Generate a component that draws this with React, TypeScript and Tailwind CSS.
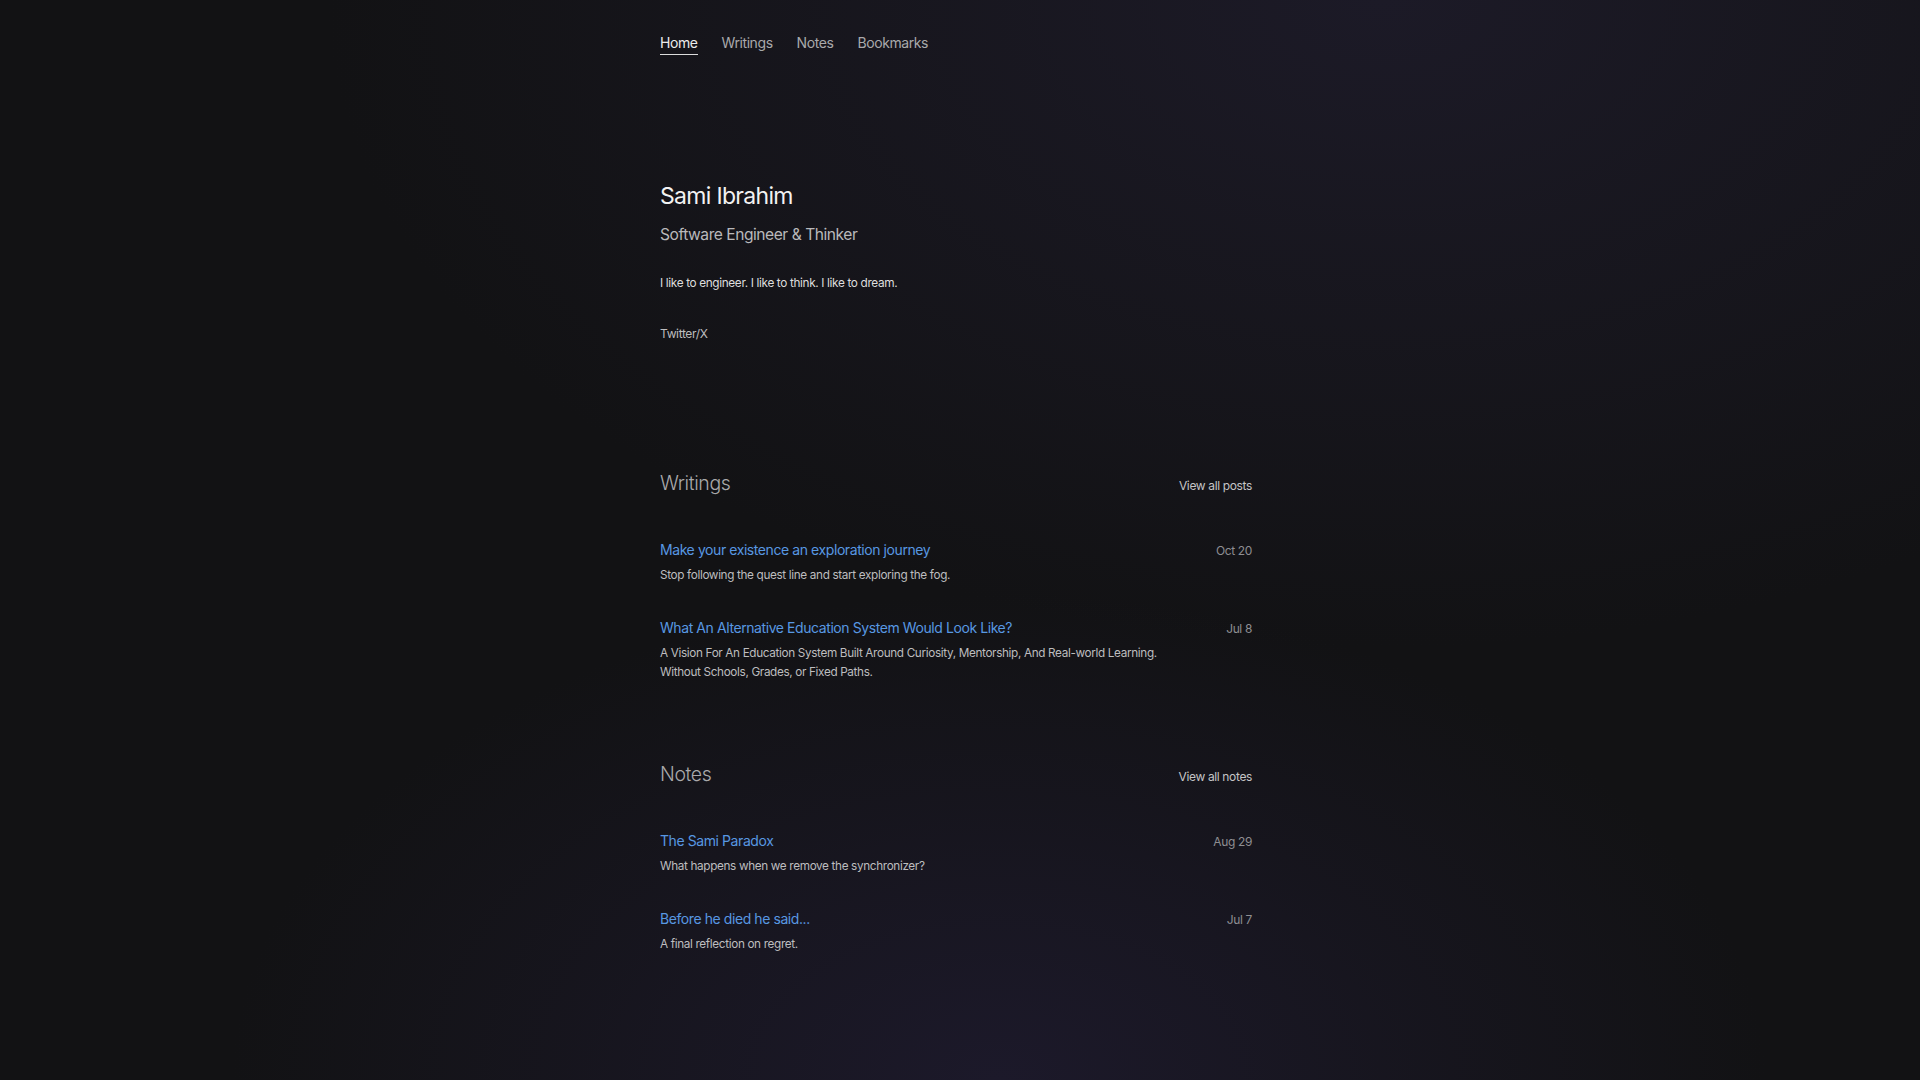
type Entry = {
  title: string;
  summary: string;
  date: string;
};

const writings: Entry[] = [
  {
    title: 'Make your existence an exploration journey',
    summary: 'Stop following the quest line and start exploring the fog.',
    date: 'Oct 20',
  },
  {
    title: 'What An Alternative Education System Would Look Like?',
    summary:
      'A Vision For An Education System Built Around Curiosity, Mentorship, And Real-world Learning. Without Schools, Grades, or Fixed Paths.',
    date: 'Jul 8',
  },
];

const notes: Entry[] = [
  {
    title: 'The Sami Paradox',
    summary: 'What happens when we remove the synchronizer?',
    date: 'Aug 29',
  },
  {
    title: 'Before he died he said...',
    summary: 'A final reflection on regret.',
    date: 'Jul 7',
  },
];

const navItems = ['Home', 'Writings', 'Notes', 'Bookmarks'];

function Section({ heading, linkLabel, entries, className }: { heading: string; linkLabel: string; entries: Entry[]; className?: string }) {
  return (
    <section className={className}>
      <div className="flex items-baseline justify-between">
        <h2 className="text-[19.5px] leading-7 font-light tracking-[-0.02em] text-[#a9a9ab]">{heading}</h2>
        <a href="#" className="text-[12px] leading-4 tracking-[-0.03em] text-[#c4c4c6]">
          {linkLabel}
        </a>
      </div>
      <div className="mt-[42px] flex flex-col gap-8">
        {entries.map((entry) => (
          <div key={entry.title} className="flex items-baseline justify-between gap-8">
            <div className="max-w-[530px]">
              <a href="#" className="block text-[14px] leading-[22px] tracking-[-0.03em] text-[#5898e2]">
                {entry.title}
              </a>
              <p className="mt-[5px] text-[11.75px] leading-[19px] tracking-[-0.03em] text-[#bdbdbf]">{entry.summary}</p>
            </div>
            <span className="shrink-0 text-[12px] tracking-[-0.03em] text-[#8e8e92]">{entry.date}</span>
          </div>
        ))}
      </div>
    </section>
  );
}

export default function App() {
  return (
    <div className="min-h-screen bg-[#121214] bg-[radial-gradient(ellipse_55%_60%_at_72%_0%,#1c1a27_0%,transparent_100%),radial-gradient(ellipse_40%_45%_at_52%_100%,#1c192a_0%,transparent_100%)] font-[Inter,sans-serif]">
      <div className="mx-auto w-[600px] pr-2 pt-[33px] pb-24">
        <nav className="flex gap-6">
          {navItems.map((item, i) => (
            <a
              key={item}
              href="#"
              className={
                i === 0
                  ? 'pb-px border-b border-[#dcdcdc] text-[14px] leading-5 tracking-[-0.03em] text-[#ececec]'
                  : 'pb-px border-b border-transparent text-[14px] leading-5 tracking-[-0.03em] text-[#a9a9ab]'
              }
            >
              {item}
            </a>
          ))}
        </nav>

        <header className="mt-[125px]">
          <h1 className="text-[23px] leading-8 tracking-[-0.03em] text-[#f2f2f2]">Sami Ibrahim</h1>
          <p className="mt-[11px] text-[15.6px] leading-6 tracking-[-0.03em] text-[#b9b9bb]">Software Engineer &amp; Thinker</p>
          <p className="mt-[27px] text-[11.8px] leading-[18px] tracking-[-0.03em] text-[#dedede]">
            I like to engineer. I like to think. I like to dream.
          </p>
          <a href="#" className="mt-[34px] block text-[12px] leading-4 tracking-[-0.03em] text-[#bdbdbf]">
            Twitter/X
          </a>
        </header>

        <Section className="mt-[127px]" heading="Writings" linkLabel="View all posts" entries={writings} />
        <Section className="mt-[78px]" heading="Notes" linkLabel="View all notes" entries={notes} />
      </div>
    </div>
  );
}
